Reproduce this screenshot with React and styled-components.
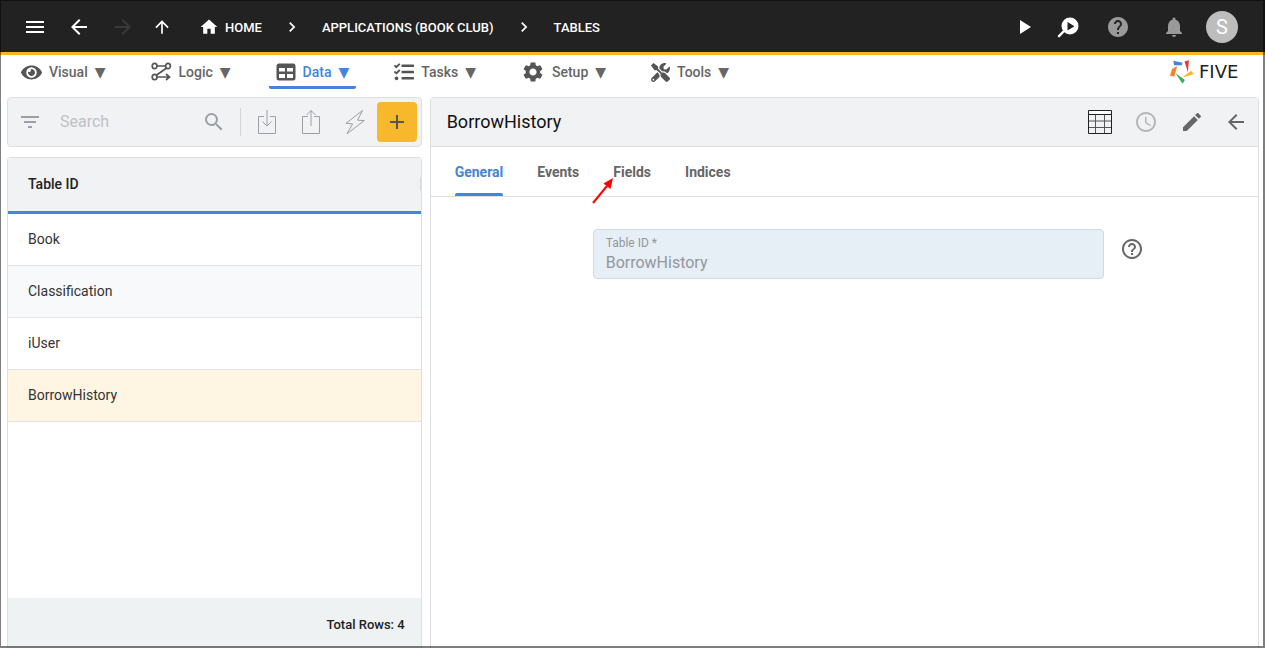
import React from 'react';
import styled, {createGlobalStyle, css} from 'styled-components';
import {
    MdMenu, MdArrowBack, MdArrowForward, MdArrowUpward, MdHome, MdChevronRight, MdPlayArrow,
    MdHelp, MdNotifications, MdFilterList, MdSearch, MdAdd, MdAccessTime, MdEdit, MdHelpOutline, MdSettings
} from 'react-icons/md';
import {FaEye, FaTasks, FaTools} from 'react-icons/fa';

const GlobalStyle = createGlobalStyle`
    * {
        box-sizing: border-box;
    }

    body {
        margin: 0;
        background-color: #fff;
        color: #222;
        font-family: Roboto, "Liberation Sans", sans-serif;
        font-size: 14px;
    }

    button, input {
        font: inherit;
        color: inherit;
    }

    svg {
        display: block;
        flex: none;
    }
`;

const Page = styled.div`
    position: relative;
    display: flex;
    flex-direction: column;
    height: 100vh;
    overflow: hidden;

    &::after {
        content: '';
        position: absolute;
        inset: 0;
        border: solid rgba(0, 0, 0, 0.5);
        border-width: 1px 2px 2px 1px;
        pointer-events: none;
    }
`;

const TopBar = styled.header`
    display: flex;
    align-items: center;
    justify-content: space-between;
    height: 55px;
    padding: 2px 27px 0 23px;
    background-color: #222;
    border-bottom: 3px solid #fbb429;
    color: #fff;
`;

const Group = styled.div`
    display: flex;
    align-items: center;
    gap: ${props => props.$gap || 20}px;
`;

const IconButton = styled.button`
    display: flex;
    align-items: center;
    justify-content: center;
    width: ${props => props.$width || 24}px;
    height: 24px;
    padding: 0;
    border: 0;
    background: none;
    color: ${props => props.$color || 'inherit'};
    cursor: pointer;
`;

const Crumbs = styled.nav`
    display: flex;
    align-items: center;
    gap: 20px;
    margin-left: 5px;
`;

const Crumb = styled.a`
    display: flex;
    align-items: center;
    gap: 6px;
    color: #fff;
    font-size: 13px;
    font-weight: 500;
    text-decoration: none;
    text-transform: uppercase;
`;

const Avatar = styled.button`
    width: 32px;
    height: 32px;
    padding: 0;
    border: 0;
    border-radius: 50%;
    background-color: #bdbdbd;
    color: #fff;
    font-size: 20px;
    line-height: 32px;
`;

const MenuBar = styled.div`
    display: flex;
    justify-content: space-between;
    height: 42px;
    padding: 0 8px 8px 14px;
`;

const Menu = styled.nav`
    display: flex;
    gap: 31px;
`;

const MenuItem = styled.button`
    display: flex;
    align-items: center;
    gap: 7px;
    padding: 3px 7px 0;
    border: 0;
    border-bottom: 3px solid ${props => props.$active ? '#4285d9' : 'transparent'};
    border-radius: 2px;
    background: none;
    color: ${props => props.$active ? '#4285d9' : '#666'};
    font-weight: 500;
    cursor: pointer;

    svg {
        color: #555;
    }
`;

const Caret = styled.span`
    font-family: "DejaVu Sans", sans-serif;
    font-size: 14px;
    font-weight: 400;
`;

const Brand = styled.div`
    display: flex;
    align-items: center;
    gap: 5px;
    color: #222;
`;

const Wordmark = styled.span`
    width: 58px;
    font-family: "DejaVu Sans", sans-serif;
    font-size: 18px;
    line-height: 24px;
`;

const Main = styled.main`
    flex: 1;
    display: grid;
    grid-template-columns: minmax(0, 1fr) minmax(0, 2fr);
    gap: 8px;
    min-height: 0;
    padding: 0 6px 0 7px;
`;

const Side = styled.section`
    display: flex;
    flex-direction: column;
    gap: 10px;
`;

const panel = css`
    border: 1px solid #dedfe0;
    border-radius: 4px;
`;

const Toolbar = styled.div`
    ${panel}
    display: flex;
    align-items: center;
    height: 50px;
    padding: 0 4px 0 10px;
    background-color: #f1f2f4;
    color: #9aa0a6;
`;

const SearchInput = styled.input`
    flex: 1;
    min-width: 0;
    padding: 0 18px 2px;
    border: 0;
    outline: 0;
    background: none;
    font-size: 16px;

    &::placeholder {
        color: #bfc1c4;
    }
`;

const Divider = styled.span`
    width: 1px;
    height: 28px;
    margin: 0 4px 0 14px;
    background-color: #d3d5d7;
`;

const AddButton = styled.button`
    display: flex;
    align-items: center;
    justify-content: center;
    width: 40px;
    height: 40px;
    padding: 0;
    border: 0;
    border-radius: 4px;
    background-color: #f8b82c;
    color: #555;
`;

const ListPanel = styled.div`
    ${panel}
    flex: 1;
    display: flex;
    flex-direction: column;
    justify-content: space-between;
    border-bottom: 0;
    border-radius: 4px 4px 0 0;
`;

const Table = styled.table`
    width: 100%;
    border-collapse: separate;
    border-spacing: 0;
`;

const HeadCell = styled.th`
    height: 56px;
    padding: 0 0 2px 20px;
    background-color: #f1f2f4;
    border-bottom: 3px solid #4285d9;
    font-weight: 500;
    text-align: left;
`;

const HeadContent = styled.div`
    display: flex;
    align-items: center;
    justify-content: space-between;

    &::after {
        content: '';
        width: 1px;
        height: 14px;
        background-color: #d9dbdd;
    }
`;

const Row = styled.tr`
    background-color: #fff;

    &:nth-child(even) {
        background-color: #f8f9fb;
    }

    &[aria-selected='true'] {
        background-color: #fff5e2;
    }
`;

const Cell = styled.td`
    height: 52px;
    padding: 0 20px 2px;
    border-bottom: 1px solid #e2e3e4;
    color: #333;
`;

const ListFooter = styled.div`
    height: 50px;
    padding: 0 16px;
    background-color: #eef2f3;
    font-size: 13px;
    font-weight: 500;
    line-height: 54px;
    text-align: right;
`;

const Detail = styled.section`
    ${panel}
    border-bottom: 0;
    border-radius: 4px 4px 0 0;
`;

const DetailHeader = styled.div`
    display: flex;
    align-items: center;
    justify-content: space-between;
    height: 49px;
    padding: 0 10px 0 16px;
    background-color: #f1f2f4;
    border-bottom: 1px solid #dedfe0;
    color: #666;
`;

const Title = styled.h1`
    margin: 0;
    padding-bottom: 2px;
    color: #111;
    font-size: 18px;
    font-weight: 400;
`;

const Tabs = styled.div`
    display: flex;
    gap: 34px;
    height: 50px;
    padding: 0 24px;
    border-bottom: 1px solid #dedfe0;
`;

const Tab = styled.button`
    position: relative;
    padding: 1px 0 0;
    border: 0;
    background: none;
    color: ${props => props.$active ? '#4285d9' : '#666'};
    font-weight: 700;
    cursor: pointer;

    ${props => props.$active && css`
        &::after {
            content: '';
            position: absolute;
            left: 0;
            right: 0;
            bottom: 0;
            height: 3px;
            border-radius: 2px 2px 0 0;
            background-color: #4285d9;
        }
    `}
`;

const Pointer = styled.svg`
    position: absolute;
    right: 100%;
    top: 30px;
`;

const Form = styled.form`
    display: flex;
    gap: 16px;
    padding: 32px 114px 0 162px;
    color: #666;
`;

const Field = styled.label`
    flex: 1;
    display: flex;
    flex-direction: column;
    height: 50px;
    padding: 5px 12px;
    border: 1px solid #cbdcec;
    border-radius: 4px;
    background-color: #e6eef6;
    color: #92979c;
    font-size: 12px;
    line-height: 16px;

    input {
        width: 100%;
        height: 22px;
        padding: 0;
        border: 0;
        outline: 0;
        background: none;
        font-size: 16px;
    }
`;

const HelpSlot = styled.div`
    padding-top: 8px;
`;

const LogicIcon = () => (
    <svg width="21" height="20" viewBox="0 0 21 20" fill="none" stroke="currentColor" strokeWidth="1.7">
        <ellipse cx="3.6" cy="4" rx="2.4" ry="2.7"/>
        <ellipse cx="17" cy="4" rx="2.4" ry="2.7"/>
        <ellipse cx="3.6" cy="15" rx="2.4" ry="2.7"/>
        <path d="M6 4h8.5M15.3 6.2 5.6 13M6 15h11.5M15 12l3.5 3-3.5 3"/>
    </svg>
);

const DataIcon = () => (
    <svg width="20" height="18" viewBox="0 0 20 18">
        <rect x="0.5" y="0.5" width="19" height="17" rx="2.5" fill="currentColor"/>
        <path d="M3 5h6v3.5H3zM11 5h6v3.5h-6zM3 11h6v4H3zM11 11h6v4h-6z" fill="#fff"/>
    </svg>
);

const InspectIcon = () => (
    <svg width="24" height="24" viewBox="0 0 24 24">
        <circle cx="14" cy="11" r="8.5" fill="#fff"/>
        <path d="m8 16-5 5.2" stroke="#fff" strokeWidth="2.4" strokeLinecap="round"/>
        <path d="M11.5 7v8.4l7-4.2z" fill="#222"/>
    </svg>
);

const ImportIcon = () => (
    <svg width="20" height="26" viewBox="0 0 20 26" fill="none" stroke="currentColor">
        <path d="M7 7.5H1.5v17h17v-17H13M10 1v16M5.5 12.5 10 17l4.5-4.5"/>
    </svg>
);

const ExportIcon = () => (
    <svg width="20" height="26" viewBox="0 0 20 26" fill="none" stroke="currentColor">
        <path d="M7 7.5H1.5v17h17v-17H13M10 17V1.5M5.5 6 10 1.5 14.5 6"/>
    </svg>
);

const BoltIcon = () => (
    <svg width="20" height="26" viewBox="0 0 20 26" fill="none" stroke="currentColor" strokeLinejoin="round">
        <path d="M17.5 1.5 1 14.3l6.6.6L2 24.8l17.3-13.2-6.8-.4z"/>
    </svg>
);

const GridIcon = () => (
    <svg width="24" height="24" viewBox="0 0 24 24" fill="none">
        <path d="M1 1h22v3H1z" fill="#fff"/>
        <path d="M1 11h22M1 17.5h22M7.5 4v19M16.5 4v19" stroke="#555"/>
        <path d="M0 4.5h24M.5.5h23v23H.5z" stroke="#222"/>
    </svg>
);

const FiveLogo = () => (
    <svg width="24" height="24" viewBox="676 180 71 70">
        <path d="M686 182 713 188 711 195 688 195z" fill="#3f86db"/>
        <path d="M719 184 732 180 729 216z" fill="#e53935"/>
        <path d="M711 232 738 211 747 221z" fill="#fbb429"/>
        <path d="M692 218 720 239 713 250z" fill="#3dab55"/>
        <path d="M676 226 682 206 697 197 689 228z" fill="#f5812c"/>
    </svg>
);

const menu = [
    {label: 'Visual', icon: <FaEye size={21}/>},
    {label: 'Logic', icon: <LogicIcon/>},
    {label: 'Data', icon: <DataIcon/>, active: true},
    {label: 'Tasks', icon: <FaTasks size={20}/>},
    {label: 'Setup', icon: <MdSettings size={24}/>},
    {label: 'Tools', icon: <FaTools size={19}/>},
];

const tables = ['Book', 'Classification', 'iUser', 'BorrowHistory'];

const tabs = ['General', 'Events', 'Fields', 'Indices'];

function Header() {
    return (
        <TopBar>
            <Group>
                <IconButton aria-label="Menu"><MdMenu size={24}/></IconButton>
                <IconButton aria-label="Back"><MdArrowBack size={24}/></IconButton>
                <Group $gap={15}>
                    <IconButton aria-label="Forward" $color="#393939"><MdArrowForward size={24}/></IconButton>
                    <IconButton aria-label="Up"><MdArrowUpward size={20}/></IconButton>
                </Group>
                <Crumbs>
                    <Crumb href="#home"><MdHome size={20}/>Home</Crumb>
                    <MdChevronRight size={20}/>
                    <Crumb href="#applications">Applications (Book Club)</Crumb>
                    <MdChevronRight size={20}/>
                    <Crumb href="#tables">Tables</Crumb>
                </Crumbs>
            </Group>
            <Group>
                <Group $gap={26}>
                    <Group>
                        <IconButton aria-label="Run"><MdPlayArrow size={24}/></IconButton>
                        <IconButton aria-label="Inspect"><InspectIcon/></IconButton>
                    </Group>
                    <Group $gap={32}>
                        <IconButton aria-label="Help" $color="#999"><MdHelp size={24}/></IconButton>
                        <IconButton aria-label="Notifications" $color="#999"><MdNotifications size={24}/></IconButton>
                    </Group>
                </Group>
                <Avatar>S</Avatar>
            </Group>
        </TopBar>
    );
}

function TableList() {
    return (
        <Side>
            <Toolbar>
                <IconButton aria-label="Filter"><MdFilterList size={24}/></IconButton>
                <SearchInput type="text" placeholder="Search" aria-label="Search"/>
                <IconButton aria-label="Search"><MdSearch size={24}/></IconButton>
                <Divider/>
                <IconButton aria-label="Import" $width={44}><ImportIcon/></IconButton>
                <IconButton aria-label="Export" $width={44}><ExportIcon/></IconButton>
                <IconButton aria-label="Quick action" $width={44}><BoltIcon/></IconButton>
                <AddButton aria-label="Add"><MdAdd size={24}/></AddButton>
            </Toolbar>
            <ListPanel>
                <Table>
                    <thead>
                        <tr>
                            <HeadCell><HeadContent>Table ID</HeadContent></HeadCell>
                        </tr>
                    </thead>
                    <tbody>
                        {tables.map(name => (
                            <Row key={name} aria-selected={name === 'BorrowHistory'}>
                                <Cell>{name}</Cell>
                            </Row>
                        ))}
                    </tbody>
                </Table>
                <ListFooter>Total Rows: {tables.length}</ListFooter>
            </ListPanel>
        </Side>
    );
}

function TableDetail() {
    return (
        <Detail>
            <DetailHeader>
                <Title>BorrowHistory</Title>
                <Group>
                    <Group $gap={22}>
                        <IconButton aria-label="Data view"><GridIcon/></IconButton>
                        <IconButton aria-label="History" $color="#b5b6b8"><MdAccessTime size={24}/></IconButton>
                        <IconButton aria-label="Edit"><MdEdit size={24}/></IconButton>
                    </Group>
                    <IconButton aria-label="Close"><MdArrowBack size={24}/></IconButton>
                </Group>
            </DetailHeader>
            <Tabs role="tablist">
                {tabs.map(tab => (
                    <Tab key={tab} role="tab" $active={tab === 'General'}>
                        {tab}
                        {tab === 'Fields' && (
                            <Pointer width="22" height="27" viewBox="0 0 22 27">
                                <path d="M2 26 16 9" stroke="#f00" strokeWidth="2"/>
                                <path d="M22 1 12.5 6.5 19.5 12z" fill="#f00"/>
                            </Pointer>
                        )}
                    </Tab>
                ))}
            </Tabs>
            <Form>
                <Field>
                    Table ID *
                    <input type="text" defaultValue="BorrowHistory" readOnly/>
                </Field>
                <HelpSlot>
                    <IconButton type="button" aria-label="Field help"><MdHelpOutline size={24}/></IconButton>
                </HelpSlot>
            </Form>
        </Detail>
    );
}

function App() {
    return (
        <Page>
            <GlobalStyle/>
            <Header/>
            <MenuBar>
                <Menu>
                    {menu.map(item => (
                        <MenuItem key={item.label} $active={item.active}>
                            {item.icon}
                            {item.label}
                            <Caret>▼</Caret>
                        </MenuItem>
                    ))}
                </Menu>
                <Brand>
                    <FiveLogo/>
                    <Wordmark>FIVE</Wordmark>
                </Brand>
            </MenuBar>
            <Main>
                <TableList/>
                <TableDetail/>
            </Main>
        </Page>
    );
}

export default App;
